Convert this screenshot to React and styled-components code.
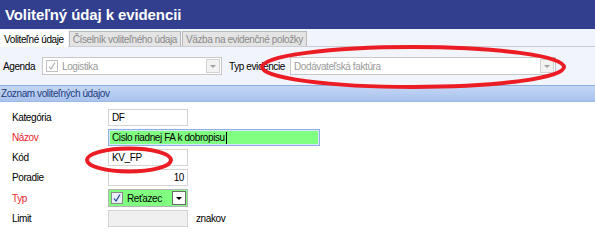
import React from "react";
import styled, { createGlobalStyle } from "styled-components";

const Global = createGlobalStyle`
  html, body { margin: 0; padding: 0; background: #fff; }
  body {
    font-family: "Liberation Sans", Arial, sans-serif;
    font-size: 10px;
    letter-spacing: -0.4px;
    color: #000;
  }
`;

const Window = styled.div`
  position: relative;
  width: 595px;
  height: 246px;
  overflow: hidden;
  background: #fff;
`;

const TitleBar = styled.div`
  height: 29px;
  background: #323e8e;
  color: #fff;
  font-size: 15px;
  font-weight: bold;
  letter-spacing: -0.1px;
  display: flex;
  align-items: center;
  padding-left: 5px;
`;

const TabStrip = styled.div`
  height: 17px;
  background: #f1f4fa;
  border-bottom: 1px solid #c9ccd4;
  display: flex;
  align-items: flex-end;
`;

const Tab = styled.div`
  height: ${p => (p.$active ? "17px" : "15px")};
  padding: 0 3px;
  display: flex;
  align-items: center;
  box-sizing: border-box;
  color: ${p => (p.$active ? "#000" : "#8a8a8a")};
  background: ${p => (p.$active ? "#fff" : "#e4e4e4")};
  border: 1px solid ${p => (p.$active ? "#fff" : "#b9b9b9")};
  border-bottom: none;
  margin-right: 1px;
  margin-bottom: ${p => (p.$active ? "-1px" : "0")};
`;

const FilterBar = styled.div`
  height: 38px;
  background: #f1f4fa;
  display: flex;
  align-items: center;
  padding-left: 3px;
`;

const Label = styled.span`
  color: ${p => (p.$required ? "#e8242c" : "#000")};
  width: ${p => (p.$w ? `${p.$w}px` : "auto")};
  margin-left: ${p => p.$ml || 0}px;
  flex-shrink: 0;
`;

const Combo = styled.div`
  width: ${p => p.$w}px;
  height: 18px;
  box-sizing: border-box;
  border: 1px solid #c8c8c8;
  background: #fff;
  display: flex;
  align-items: center;
  color: #9a9a9a;
  padding-left: 3px;
  gap: 4px;
`;

const Grow = styled.span`
  flex: 1;
`;

const DropBtn = styled.div`
  width: 14px;
  height: 14px;
  margin-right: 1px;
  box-sizing: border-box;
  border: 1px solid ${p => (p.$dark ? "#6a6a6a" : "#d2d2d2")};
  background: ${p => (p.$dark ? "#fff" : "#f2f2f2")};
  display: flex;
  align-items: center;
  justify-content: center;
  &::after {
    content: "";
    border-left: 3px solid transparent;
    border-right: 3px solid transparent;
    border-top: 3px solid ${p => (p.$dark ? "#000" : "#a0a0a0")};
  }
`;

const Check = styled.div`
  width: 12px;
  height: 12px;
  box-sizing: border-box;
  border: 1px solid ${p => (p.$dark ? "#8a8a8a" : "#c0c0c0")};
  background: ${p => (p.$dark ? "#e8eefc" : "#fff")};
  display: flex;
  align-items: center;
  justify-content: center;
`;

const SectionHeader = styled.div`
  height: 17px;
  box-sizing: border-box;
  border-top: 1px solid #8eaee0;
  border-bottom: 1px solid #9cb8e6;
  background: linear-gradient(#c4d6f4, #a9c3ee);
  color: #1d3b7d;
  display: flex;
  align-items: center;
  padding-left: 1px;
`;

const Form = styled.div`
  display: grid;
  grid-template-columns: 96px auto;
  row-gap: 3px;
  padding: 7px 0 0 12px;
  align-items: center;
`;

const Field = styled.div`
  display: flex;
  align-items: center;
  gap: 8px;
`;

const Input = styled.div`
  width: ${p => p.$w || 80}px;
  height: 17px;
  box-sizing: border-box;
  border: 1px solid ${p => (p.$focus ? "#8eb0e4" : "#d4d4d4")};
  background: ${p => p.$bg || "#fff"};
  display: flex;
  align-items: center;
  justify-content: ${p => (p.$right ? "flex-end" : "flex-start")};
  padding: 0 3px;
  ${p => p.$focus && "box-shadow: inset 0 0 0 1px #d8e6fa;"}
`;

const Caret = styled.span`
  display: inline-block;
  width: 1px;
  height: 12px;
  background: #000;
  margin-left: 1px;
`;

const TypeCombo = styled.div`
  width: 80px;
  height: 18px;
  box-sizing: border-box;
  border: 1px solid #b4b4b4;
  background: #80ff80;
  display: flex;
  align-items: center;
  padding-left: 2px;
  gap: 4px;
`;

const Ellipse = styled.svg`
  position: absolute;
  left: ${p => p.$x}px;
  top: ${p => p.$y}px;
  pointer-events: none;
`;

const Tick = ({ color }) => (
  <svg width="8" height="8" viewBox="0 0 8 8">
    <path d="M1 4.5 L3 7 L7 0.5" fill="none" stroke={color} strokeWidth="1.2" />
  </svg>
);

export default function App() {
  return (
    <>
      <Global />
      <Window>
        <TitleBar>Voliteľný údaj k evidencii</TitleBar>
        <TabStrip>
          <Tab $active>Voliteľné údaje</Tab>
          <Tab>Číselník voliteľného údaja</Tab>
          <Tab>Väzba na evidenčné položky</Tab>
        </TabStrip>
        <FilterBar>
          <Label $w={39}>Agenda</Label>
          <Combo $w={180}>
            <Check><Tick color="#b0b0b0" /></Check>
            <Grow>Logistika</Grow>
            <DropBtn />
          </Combo>
          <Label $w={61} $ml={7}>Typ evidencie</Label>
          <Combo $w={266}>
            <Grow>Dodávateľská faktúra</Grow>
            <DropBtn />
          </Combo>
        </FilterBar>
        <SectionHeader>Zoznam voliteľných údajov</SectionHeader>
        <Form>
          <Label>Kategória</Label>
          <Input>DF</Input>
          <Label $required>Názov</Label>
          <Input $w={212} $bg="#80ff80" $focus>Cislo riadnej FA k dobropisu<Caret /></Input>
          <Label>Kód</Label>
          <Input>KV_FP</Input>
          <Label>Poradie</Label>
          <Input $right>10</Input>
          <Label $required>Typ</Label>
          <TypeCombo>
            <Check $dark><Tick color="#2040a0" /></Check>
            <Grow>Reťazec</Grow>
            <DropBtn $dark />
          </TypeCombo>
          <Label>Limit</Label>
          <Field>
            <Input $bg="#f0f0f0" />
            <span>znakov</span>
          </Field>
        </Form>
        <Ellipse $x={258} $y={44} width="310" height="46" viewBox="0 0 310 46">
          <ellipse cx="155" cy="23" rx="151" ry="20" fill="none" stroke="#ec1c24" strokeWidth="4" />
        </Ellipse>
        <Ellipse $x={84} $y={146} width="90" height="28" viewBox="0 0 90 28">
          <ellipse cx="45" cy="14" rx="42" ry="11.5" fill="none" stroke="#ec1c24" strokeWidth="4" />
        </Ellipse>
      </Window>
    </>
  );
}
